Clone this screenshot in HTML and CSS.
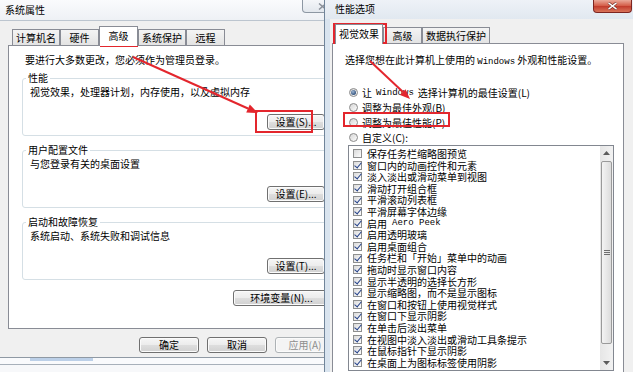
FILE: index.html
```html
<!DOCTYPE html>
<html lang="zh-CN">
<head>
  <meta charset="UTF-8" />
  <title>系统属性 - 性能选项</title>
  <link rel="stylesheet" href="styles.css">
</head>
<body>

<div class="desk">
  <div class="win win-sys">
    <div class="sys-inner">
      <div class="titlebar sys-titlebar">
        <span class="title">系统属性</span>
        <span class="close-btn">
          <svg width="9" height="7" viewBox="0 0 9 7"><path d="M1 0.5 L8 6.5 M8 0.5 L1 6.5" stroke="#8a9099" stroke-width="1.4"/></svg>
        </span>
      </div>
      <div class="sys-client">
        <div class="tabs">
          <span class="tab">计算机名</span>
          <span class="tab">硬件</span>
          <span class="tab active">高级</span>
          <span class="tab">系统保护</span>
          <span class="tab">远程</span>
        </div>
        <div class="panel sys-panel">
          <p class="note">要进行大多数更改，您必须作为管理员登录。</p>
          <fieldset class="group">
            <legend>性能</legend>
            <p>视觉效果，处理器计划，内存使用，以及虚拟内存</p>
            <div class="row-end"><button class="btn">设置(S)...</button></div>
          </fieldset>
          <fieldset class="group">
            <legend>用户配置文件</legend>
            <p>与您登录有关的桌面设置</p>
            <div class="row-end"><button class="btn">设置(E)...</button></div>
          </fieldset>
          <fieldset class="group">
            <legend>启动和故障恢复</legend>
            <p>系统启动、系统失败和调试信息</p>
            <div class="row-end"><button class="btn">设置(T)...</button></div>
          </fieldset>
          <div class="row-end"><button class="btn btn-wide">环境变量(N)...</button></div>
        </div>
        <div class="dlg-buttons">
          <button class="btn btn-dlg">确定</button>
          <button class="btn btn-dlg">取消</button>
          <button class="btn btn-dlg" disabled>应用(A)</button>
        </div>
      </div>
      <div class="frame-bottom"><div class="strip"></div></div>
    </div>
  </div>

  <div class="win win-perf">
    <div class="titlebar perf-titlebar">
      <span class="title perf-title">性能选项</span>
      <span class="close-btn close-red">
        <svg width="11" height="8" viewBox="0 0 11 8"><path d="M1.5 0.8 L9.5 7.2 M9.5 0.8 L1.5 7.2" stroke="#5a1a14" stroke-width="2.6"/><path d="M1.5 0.8 L9.5 7.2 M9.5 0.8 L1.5 7.2" stroke="#fff" stroke-width="1.5"/></svg>
      </span>
    </div>
    <div class="perf-client">
      <div class="tabs perf-tabs">
        <span class="tab active">视觉效果</span>
        <span class="tab">高级</span>
        <span class="tab">数据执行保护</span>
      </div>
      <div class="panel perf-panel">
        <p class="lead">选择您想在此计算机上使用的 <span class="mono">Windows</span> 外观和性能设置。</p>
        <div class="radios">
          <div class="radio-row"><span class="rb on"></span>让 <span class="mono">Windows</span> 选择计算机的最佳设置(L)</div>
          <div class="radio-row"><span class="rb"></span>调整为最佳外观(B)</div>
          <div class="radio-row"><span class="rb"></span>调整为最佳性能(P)</div>
          <div class="radio-row"><span class="rb"></span>自定义(C):</div>
        </div>
        <div class="listbox">
          <div class="items">
            <div class="item"><span class="cb"></span>保存任务栏缩略图预览</div>
            <div class="item"><span class="cb on"></span>窗口内的动画控件和元素</div>
            <div class="item"><span class="cb on"></span>淡入淡出或滑动菜单到视图</div>
            <div class="item"><span class="cb on"></span>滑动打开组合框</div>
            <div class="item"><span class="cb on"></span>平滑滚动列表框</div>
            <div class="item"><span class="cb on"></span>平滑屏幕字体边缘</div>
            <div class="item"><span class="cb on"></span>启用 <span class="mono">Aero Peek</span></div>
            <div class="item"><span class="cb on"></span>启用透明玻璃</div>
            <div class="item"><span class="cb on"></span>启用桌面组合</div>
            <div class="item"><span class="cb on"></span>任务栏和「开始」菜单中的动画</div>
            <div class="item"><span class="cb on"></span>拖动时显示窗口内容</div>
            <div class="item"><span class="cb on"></span>显示半透明的选择长方形</div>
            <div class="item"><span class="cb on"></span>显示缩略图，而不是显示图标</div>
            <div class="item"><span class="cb on"></span>在窗口和按钮上使用视觉样式</div>
            <div class="item"><span class="cb on"></span>在窗口下显示阴影</div>
            <div class="item"><span class="cb on"></span>在单击后淡出菜单</div>
            <div class="item"><span class="cb on"></span>在视图中淡入淡出或滑动工具条提示</div>
            <div class="item"><span class="cb on"></span>在鼠标指针下显示阴影</div>
            <div class="item"><span class="cb on"></span>在桌面上为图标标签使用阴影</div>
          </div>
          <div class="scrollbar">
            <span class="sb-btn"><svg width="7" height="4" viewBox="0 0 7 4"><path d="M0 4 L3.5 0 L7 4 Z" fill="#5c5c5c"/></svg></span>
            <span class="sb-thumb"><svg width="6" height="5" viewBox="0 0 6 5"><path d="M0 0.5 H6 M0 2.5 H6 M0 4.5 H6" stroke="#6f6f6f" stroke-width="1"/></svg></span>
            <span class="sb-track"></span>
            <span class="sb-btn"><svg width="7" height="4" viewBox="0 0 7 4"><path d="M0 0 L3.5 4 L7 0 Z" fill="#5c5c5c"/></svg></span>
          </div>
        </div>
      </div>
    </div>
  </div>
</div>

<!-- red annotations drawn over the screenshot -->
<svg class="marks" width="633" height="372" viewBox="0 0 633 372">
  <g fill="none" stroke="#e3262d" stroke-width="2">
    <rect x="101" y="28" width="36" height="18"/>
    <rect x="256" y="111" width="56" height="21"/>
    <rect x="334" y="24" width="52" height="19"/>
    <rect x="344" y="113" width="105" height="13"/>
    <line x1="133" y1="57" x2="248" y2="108.5"/>
    <line x1="370" y1="61" x2="403" y2="92"/>
  </g>
  <g fill="#e3262d">
    <polygon points="258,113 246.2,112.6 249.8,104.4"/>
    <polygon points="410,99 400,95 405.5,89.2"/>
  </g>
</svg>

</body>
</html>
```

FILE: styles.css
```css
* {
  box-sizing: border-box;
}
body {
  margin: 0;
  width: 633px;
  height: 372px;
  overflow: hidden;
  position: relative;
  background: #f7f8fa;
  font-family: "Noto Sans CJK SC", "Noto Sans", sans-serif;
  font-size: 10px;
  color: #000;
}
.desk {
  display: flex;
  align-items: flex-start;
}
.win {
  flex: none;
  overflow: hidden;
}
.mono {
  font-family: "Liberation Mono", monospace;
  font-size: 9px;
}

/* title bars */
.titlebar {
  display: flex;
  align-items: flex-start;
}
.title {
  line-height: 20px;
  padding-left: 5px;
}
.close-btn {
  margin-left: auto;
  display: flex;
  align-items: center;
  justify-content: center;
  width: 40px;
  height: 13px;
  border: 1px solid #8d97a3;
  border-top: none;
  border-radius: 0 0 4px 4px;
  background: linear-gradient(#f4f6f9, #e2e7ed);
  margin-right: 3px;
}

/* left window */
.win-sys {
  width: 324px;
}
.sys-inner {
  width: 345px;
}
.sys-titlebar {
  height: 21px;
  background: linear-gradient(#fafbfd, #eef1f5);
  border-bottom: 1px solid #bcc5cf;
}
.sys-client {
  height: 337px;
  background: #f0f0f0;
  padding: 5px 10px 0 8px;
  border-bottom: 1px solid #8f99a4;
}
.frame-bottom {
  height: 7px;
  padding-left: 30px;
  background: #f9fafc;
  border-bottom: 1px solid #a7b0ba;
}
.strip {
  width: 63px;
  height: 3px;
  background: #bcd0e8;
}

/* tabs */
.tabs {
  display: flex;
  align-items: flex-end;
  height: 19px;
  padding-left: 4px;
}
.tab {
  min-width: 39px;
  height: 16px;
  line-height: 15px;
  padding: 0 3px;
  text-align: center;
  border: 1px solid #898c95;
  border-bottom: none;
  background: linear-gradient(#f4f4f4, #e3e3e3);
  white-space: nowrap;
}
.tab.active {
  height: 20px;
  line-height: 17px;
  margin-bottom: -1px;
  background: #fff;
  position: relative;
  z-index: 1;
}
.panel {
  background: #fff;
  border: 1px solid #898c95;
}
.sys-panel {
  height: 284px;
  padding: 8px 4px 0 13px;
}
.note {
  margin: 0 0 6px 3px;
  line-height: 12px;
}
.group {
  margin: 0;
  min-width: 0;
  padding: 2px 4px 5px 7px;
  border: 1px solid #d5dfe5;
  border-radius: 3px;
}
.group + .group {
  margin-top: 8px;
}
.group legend {
  margin-left: -4px;
  padding: 0 2px;
  line-height: 12px;
}
.group p {
  margin: 0;
  line-height: 12px;
}
.row-end {
  display: flex;
  justify-content: flex-end;
}
.group .row-end {
  margin-top: 16px;
}

/* buttons */
.btn {
  font: inherit;
  color: #000;
  width: 58px;
  height: 16px;
  line-height: 14px;
  padding: 0;
  border: 1px solid #707070;
  border-radius: 3px;
  background: linear-gradient(#f6f6f6, #ececec 50%, #dedede 51%, #d1d1d1);
  box-shadow: inset 0 0 0 1px #fbfbfb;
  white-space: nowrap;
}
.btn-wide {
  width: 97px;
  margin-top: 10px;
}
.dlg-buttons {
  display: flex;
  justify-content: flex-end;
  gap: 8px;
  margin-top: 8px;
}
.btn-dlg {
  width: 60px;
}
.btn:disabled {
  color: #8d8d8d;
  border-color: #adb2b5;
  background: #f4f4f4;
}

/* right window */
.win-perf {
  width: 309px;
  height: 372px;
  border-left: 1px solid #71859a;
  background: #d9e4ef;
}
.perf-titlebar {
  height: 19px;
  background: linear-gradient(#eef2f7, #e1e8f0);
}
.perf-title {
  line-height: 17px;
  padding-left: 10px;
}
.close-red {
  width: 39px;
  margin-right: 1px;
  border-color: #7d2520;
  background: linear-gradient(#eaa999, #d35a45 50%, #c13a2b 51%, #d9745a);
}
.perf-client {
  margin-left: 5px;
  height: 353px;
  background: #f0f0f0;
  padding: 5px 0 0 2px;
}
.perf-tabs {
  padding-left: 3px;
}
.perf-panel {
  width: 292px;
  height: 340px;
  padding: 10px 0 0 12px;
}
.lead {
  margin: 0;
  line-height: 12px;
  white-space: nowrap;
}
.radios {
  margin-top: 17px;
}
.radio-row {
  display: flex;
  align-items: center;
  gap: 4px;
  height: 15px;
  padding-left: 4px;
  white-space: nowrap;
}
.rb {
  flex: none;
  display: flex;
  align-items: center;
  justify-content: center;
  width: 9px;
  height: 9px;
  border-radius: 50%;
  border: 1px solid #8a8a8a;
  background: linear-gradient(135deg, #d6d6d6, #fbfbfb);
}
.rb.on::after {
  content: "";
  width: 5px;
  height: 5px;
  border-radius: 50%;
  background: radial-gradient(circle at 40% 35%, #9fb7d3, #2c4c78 75%);
}

/* list */
.listbox {
  display: flex;
  margin-left: 3px;
  width: 266px;
  height: 226px;
  border: 1px solid #828790;
  background: #fff;
}
.items {
  flex: 1;
  padding-top: 2px;
  overflow: hidden;
}
.item {
  display: flex;
  align-items: center;
  gap: 5px;
  height: 11.6px;
  line-height: 11.6px;
  padding-left: 4px;
  white-space: nowrap;
}
.cb {
  flex: none;
  display: flex;
  align-items: center;
  justify-content: center;
  width: 9px;
  height: 9px;
  border: 1px solid #8e8f8f;
  background: linear-gradient(135deg, #dadada, #fdfdfd);
}
.cb.on::after {
  content: "";
  width: 3px;
  height: 6px;
  border: solid #23418a;
  border-width: 0 1.5px 1.5px 0;
  transform: translateY(-1px) rotate(40deg);
}
.scrollbar {
  flex: none;
  width: 13px;
  display: flex;
  flex-direction: column;
  background: linear-gradient(90deg, #e6e6e6, #f2f2f2);
}
.sb-btn {
  height: 14px;
  display: flex;
  align-items: center;
  justify-content: center;
}
.sb-thumb {
  margin: 1px 1px 0;
  height: 183px;
  display: flex;
  align-items: center;
  justify-content: center;
  border: 1px solid #9a9a9a;
  border-radius: 2px;
  background: linear-gradient(90deg, #f4f4f4, #dcdcdc);
}
.sb-track {
  flex: 1;
}

/* annotation layer */
.marks {
  position: absolute;
  left: 0;
  top: 0;
  pointer-events: none;
}
```
